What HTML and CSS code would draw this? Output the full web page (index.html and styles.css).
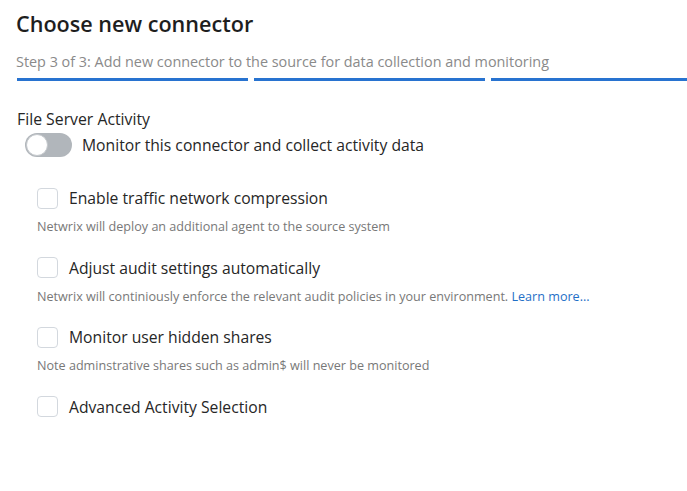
FILE: index.html
```html
<!DOCTYPE html>
<html lang="en">
<head>
<meta charset="utf-8">
<title>Choose new connector</title>
<link rel="stylesheet" href="styles.css">
</head>
<body>
<main class="page">
  <header class="head">
    <h1 class="title">Choose new connector</h1>
    <p class="step">Step 3 of 3: Add new connector to the source for data collection and monitoring</p>
    <div class="progress">
      <span class="seg"></span>
      <span class="seg"></span>
      <span class="seg"></span>
    </div>
  </header>

  <section class="connector">
    <div class="conn-name">File Server Activity</div>
    <label class="toggle-row">
      <span class="toggle"><span class="knob"></span></span>
      <span class="toggle-label">Monitor this connector and collect activity data</span>
    </label>

    <div class="options">
      <div class="option">
        <label class="check-row">
          <span class="box"></span>
          <span class="check-label">Enable traffic network compression</span>
        </label>
        <p class="desc">Netwrix will deploy an additional agent to the source system</p>
      </div>
      <div class="option">
        <label class="check-row">
          <span class="box"></span>
          <span class="check-label">Adjust audit settings automatically</span>
        </label>
        <p class="desc">Netwrix will continiously enforce the relevant audit policies in your environment. <a class="link" href="#">Learn more...</a></p>
      </div>
      <div class="option">
        <label class="check-row">
          <span class="box"></span>
          <span class="check-label">Monitor user hidden shares</span>
        </label>
        <p class="desc">Note adminstrative shares such as admin$ will never be monitored</p>
      </div>
      <div class="option">
        <label class="check-row">
          <span class="box"></span>
          <span class="check-label">Advanced Activity Selection</span>
        </label>
      </div>
    </div>
  </section>
</main>
</body>
</html>
```

FILE: styles.css
```css
* { box-sizing: border-box; }

html, body {
  margin: 0;
  padding: 0;
  background: #ffffff;
  overflow: hidden;
}

body {
  font-family: "Open Sans", "Noto Sans", sans-serif;
  color: #2a2a2a;
}

.page {
  padding: 9px 0 0 16px;
}

.title {
  margin: 0;
  font-size: 21.6px;
  line-height: 30px;
  font-weight: 600;
  color: #1e1e1e;
}

.step {
  margin: 13px 0 0 0;
  font-size: 14.4px;
  line-height: 20px;
  color: #8a8a8a;
  white-space: nowrap;
}

.progress {
  display: grid;
  grid-template-columns: 231px 231px 1fr;
  gap: 6px;
  margin-top: 6px;
  padding-left: 1px;
}

.seg {
  height: 3px;
  background: #2873d0;
}

.connector {
  margin-top: 27px;
  padding-left: 1px;
}

.conn-name {
  font-size: 15.8px;
  line-height: 22px;
  color: #262626;
}

.toggle-row {
  display: flex;
  align-items: center;
  gap: 10px;
  margin-top: 3px;
  padding-left: 8px;
}

.toggle {
  display: flex;
  align-items: center;
  width: 47px;
  height: 24px;
  padding: 1px;
  border-radius: 12px;
  background: #b1b6bb;
}

.knob {
  width: 22px;
  height: 22px;
  border-radius: 50%;
  background: #ffffff;
  border: 1px solid #c4c8cc;
}

.toggle-label {
  font-size: 15.7px;
  line-height: 22px;
  color: #262626;
}

.options {
  display: flex;
  flex-direction: column;
  margin-top: 30px;
  padding-left: 20px;
}

.option {
  height: 69.6px;
}

.check-row {
  display: flex;
  align-items: center;
  gap: 11px;
}

.box {
  width: 21px;
  height: 21px;
  border: 1.5px solid #d3d8de;
  border-radius: 4px;
  background: #ffffff;
}

.check-label {
  font-size: 15.7px;
  line-height: 22px;
  color: #262626;
}

.desc {
  margin: 9px 0 0 0;
  font-size: 12.6px;
  line-height: 18px;
  color: #787878;
  white-space: nowrap;
}

.link {
  color: #1f6fc7;
  text-decoration: none;
}
```
